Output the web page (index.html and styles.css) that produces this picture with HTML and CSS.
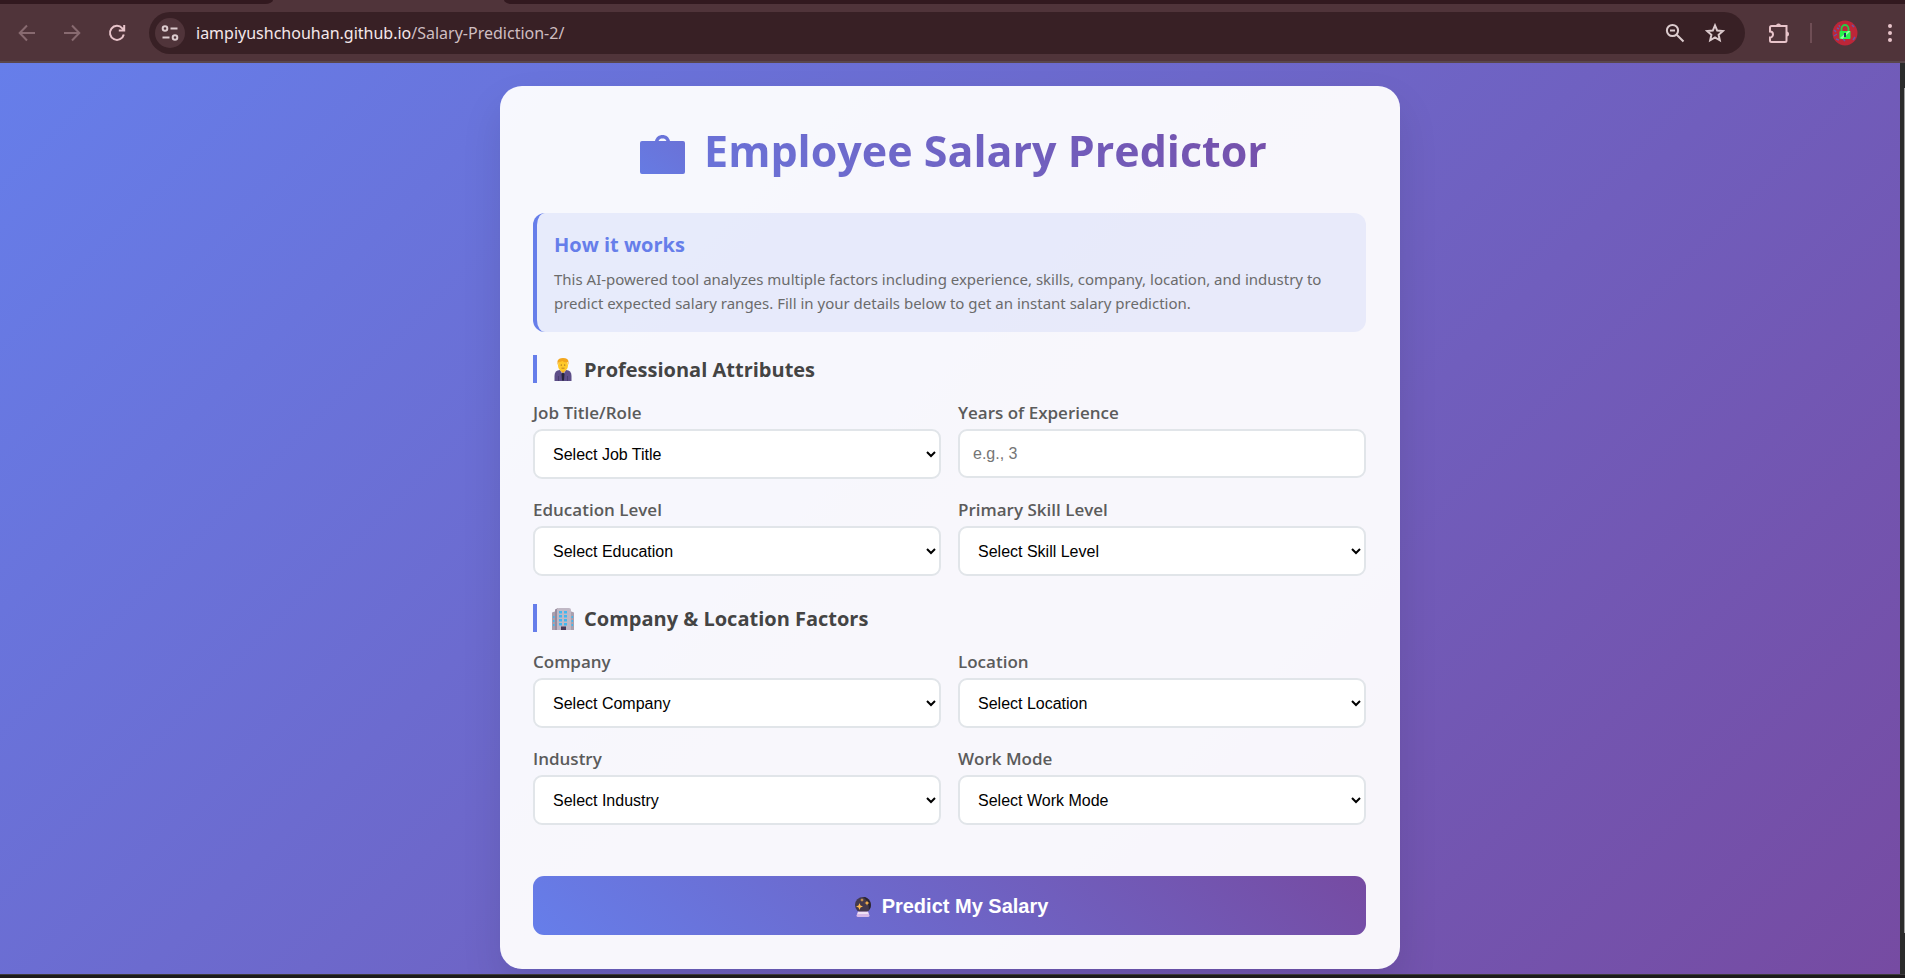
FILE: index.html
```html
<!DOCTYPE html>
<html lang="en">
<head>
<meta charset="utf-8">
<title>Employee Salary Predictor</title>
<link rel="stylesheet" href="styles.css">
</head>
<body>
<header class="browser">
  <div class="tabstrip"><span class="tab-gap tab-gap-left"></span><span class="tab-gap tab-gap-right"></span></div>
  <div class="toolbar">
    <button class="tool nav" aria-label="Back"><svg viewBox="0 0 20 20" class="dim"><path d="M18 10H3M10 2.500 2.700 10l7.300 7.500"/></svg></button>
    <button class="tool nav" aria-label="Forward"><svg viewBox="0 0 20 20" class="dim"><path d="M2 10h15M10 2.500l7.300 7.500-7.300 7.500"/></svg></button>
    <button class="tool nav" aria-label="Reload"><svg viewBox="0 0 20 20"><path d="M16.800 11.500A7 7 0 1 1 15.300 5.300L17 7M17.200 2v5.400h-5.400"/></svg></button>
    <div class="omnibox">
      <button class="site-info" aria-label="Site information"><svg viewBox="0 0 20 20"><circle cx="5" cy="5.500" r="2.300"/><path d="M10.500 5.500h7M2.500 14.500h7"/><circle cx="15" cy="14.500" r="2.300"/></svg></button>
      <a class="url" href="#">iampiyushchouhan.github.io<span class="path">/Salary-Prediction-2/</span></a>
      <button class="tool" aria-label="Zoom"><svg viewBox="0 0 20 20"><circle cx="7.500" cy="7.500" r="5.600"/><path d="M11.700 11.700 18.500 18.500M5 7.500h5"/></svg></button>
      <button class="tool" aria-label="Bookmark"><svg viewBox="0 0 20 20"><path d="m10 2.400 2.200 5.200 5.600.5-4.200 3.700 1.200 5.500-4.800-2.900-4.800 2.900 1.200-5.500-4.200-3.700 5.600-.5z"/></svg></button>
    </div>
    <button class="tool extension" aria-label="Extensions"><svg viewBox="0 0 22 22"><path d="M3.500 4h15v14.500a1.500 1.500 0 0 1-1.500 1.500H3.500a1.500 1.500 0 0 1-1.500-1.500V15.500a3 3 0 0 0 0-6V5.500A1.500 1.500 0 0 1 3.500 4z"/><path class="solid" d="M8 4a2.500 2.500 0 0 1 5 0zM18.500 9.500a2.500 2.500 0 0 1 0 5z"/></svg></button>
    <span class="divider"></span>
    <button class="tool profile" aria-label="Profile"><svg viewBox="0 0 26 26"><circle cx="13" cy="13" r="12.500" fill="#bd2638"/><path d="m2 10 2 2m-2 4 3-2m-1 5 3 1m0-15 1 2m-3 1 2 1m13-4 2 2m1 10-2 3m-10-1 2 2" stroke="#6656a8" stroke-width="1.500" fill="none"/><path d="M9.500 11V8.500a3.500 3.500 0 0 1 7 0V11" stroke="#25cf45" stroke-width="1.800" fill="none"/><rect x="7.500" y="11" width="11" height="8" rx="1" fill="#27f24b"/><path d="m8 18 8-7h2.500l-8 8z" fill="#8dff9d"/><path d="M12 13h2v4h-2z" fill="#26305f"/></svg></button>
    <button class="tool more" aria-label="Menu"><svg viewBox="0 0 20 20"><g class="solid"><circle cx="10" cy="3" r="2"/><circle cx="10" cy="10" r="2"/><circle cx="10" cy="17" r="2"/></g></svg></button>
  </div>
</header>
<div class="viewport">
  <main class="page">
    <section class="card">
      <h1 class="title"><svg class="briefcase" viewBox="0 0 45 39"><defs><linearGradient id="case" x1="0" y1="1" x2="1" y2="0"><stop stop-color="#667be3"/><stop offset="1" stop-color="#6b71d6"/></linearGradient></defs><path fill="url(#case)" fill-rule="evenodd" d="M15 6C16 2 19 0 22.500 0S29 2 30 6H43q2 0 2 2v29q0 2-2 2H2q-2 0-2-2V8q0-2 2-2zM18.500 6h8c-1-2-2-2.500-4-2.500S19.500 4 18.500 6z"/></svg><span class="title-text">Employee Salary Predictor</span></h1>
      <div class="info">
        <h2 class="info-title">How it works</h2>
        <p class="info-text">This AI-powered tool analyzes multiple factors including experience, skills, company, location, and industry to predict expected salary ranges. Fill in your details below to get an instant salary prediction.</p>
      </div>
      <form class="form">
        <h2 class="section-title"><svg class="emoji" viewBox="0 0 24 24"><path fill="#5d4e88" d="M3.500 23v-5q0-6 5.500-6h6q5.500 0 5.500 6v5z"/><path fill="#493d70" d="M7 18h1v5H7zm9 0h1v5h-1z"/><path fill="#d5d9ef" d="m9 12 3 5 3-5z"/><path fill="#25243b" d="m12 14 1.500 2-.5 6-1 1-1-1-.5-6z"/><path fill="#f5ae22" d="M9.500 9h5v4L12 15l-2.500-2z"/><ellipse cx="12" cy="7.500" rx="5" ry="5.500" fill="#ffc928"/><path fill="#f2a61d" d="M6.500 7V3q1-3 5.500-3 5.500 0 5.500 4v3l-1-3q-3 1-5-1-2 1-3.500 1z"/><circle cx="10.300" cy="7" r=".6" fill="#694228"/><circle cx="13.700" cy="7" r=".6" fill="#694228"/><path d="M10.500 10.200h3" stroke="#a36222" stroke-width=".7"/></svg>Professional Attributes</h2>
        <div class="grid">
          <div class="field"><label for="job">Job Title/Role</label><select id="job"><option>Select Job Title</option></select></div>
          <div class="field"><label for="years">Years of Experience</label><input id="years" type="text" placeholder="e.g., 3"></div>
          <div class="field"><label for="education">Education Level</label><select id="education"><option>Select Education</option></select></div>
          <div class="field"><label for="skill">Primary Skill Level</label><select id="skill"><option>Select Skill Level</option></select></div>
        </div>
        <h2 class="section-title"><svg class="emoji" viewBox="0 0 24 24"><path fill="#aaa0ae" d="M1 5.500 5 4v19H1zM19 4l4 1.500V23h-4z"/><path fill="#988c9d" d="M4 2.500 7 1v22H4z"/><path fill="#c0b8c5" d="M6 2q0-1 2-1h10q2 0 2 2v20H6z"/><path fill="#40b7ef" d="M8 4h3v2.500H8zm5 0h3v2.500h-3zM8 8h3v2.500H8zm5 0h3v2.500h-3zM8 12h3v2.500H8zm5 0h3v2.500h-3zM8 16h3v2.500H8zm5 0h3v2.500h-3zM2 9h1.500v2H2zm0 4h1.500v2H2zm0 4h1.500v2H2zM20.500 9H22v2h-1.500zm0 4H22v2h-1.500zm0 4H22v2h-1.500z"/><path fill="#493b59" d="M10 19.500h5V23h-5z"/></svg>Company &amp; Location Factors</h2>
        <div class="grid">
          <div class="field"><label for="company">Company</label><select id="company"><option>Select Company</option></select></div>
          <div class="field"><label for="location">Location</label><select id="location"><option>Select Location</option></select></div>
          <div class="field"><label for="industry">Industry</label><select id="industry"><option>Select Industry</option></select></div>
          <div class="field"><label for="mode">Work Mode</label><select id="mode"><option>Select Work Mode</option></select></div>
        </div>
        <button class="submit" type="button"><svg class="orb" viewBox="0 0 20 20"><circle cx="10" cy="8" r="8" fill="#44394c"/><path fill="#29232f" d="M10 0a8 8 0 0 1 6 13q0-9-6-13z"/><path fill="#d7b9e8" d="M5 14.500h10l1.500 4q0 1.500-1.500 1.500H5q-1.500 0-1.500-1.500z"/><path fill="#efe0f5" d="M5 15h10l.5 2h-11z"/><path fill="#ffb84d" d="m6.500 6 1 2.500L10 9.500l-2.500 1-1 2.500-1-2.500-2.500-1 2.500-1zM14 3.500l.7 1.800 1.800.7-1.800.7L14 8.500l-.7-1.800-1.800-.7 1.800-.7zM9 1l.5 1.500L11 3l-1.500.5L9 5l-.5-1.500L7 3l1.500-.5z"/></svg>Predict My Salary</button>
      </form>
    </section>
  </main>
  <div class="scrollbar"><span class="thumb"></span></div>
</div>
<footer class="taskbar"></footer>
</body>
</html>
```
FILE: styles.css
```css
* { box-sizing: border-box; }
body {
  margin: 0;
  min-height: 100vh;
  display: flex;
  flex-direction: column;
  font-family: "Open Sans", "Noto Sans", sans-serif;
  color: #444;
}
button { border: 0; padding: 0; background: none; cursor: pointer; }

/* Browser chrome */
.browser { background: #50343a; border-bottom: 2px solid #5a464b; }
.tabstrip { display: flex; justify-content: space-between; height: 4px; background: #50343a; }
.tab-gap { background: #32191f; }
.tab-gap-left { width: 273px; border-bottom-right-radius: 8px 4px; }
.tab-gap-right { width: calc(100% - 504px); border-bottom-left-radius: 8px 4px; }
.toolbar { display: flex; align-items: center; height: 57px; padding-left: 4px; }
.tool { display: grid; place-items: center; width: 40px; height: 40px; flex: none; }
.tool svg, .site-info svg { width: 20px; height: 20px; fill: none; stroke: #e8c4ca; stroke-width: 2; }
.nav { width: 45px; }
.tool .dim { stroke: #886a70; }
.omnibox {
  flex: 1;
  display: flex;
  align-items: center;
  height: 42px;
  margin-left: 10px;
  padding: 0 10px 0 6px;
  border-radius: 21px;
  background: #382025;
}
.omnibox .tool svg, .site-info svg { stroke: #dccbce; }
.site-info {
  display: grid;
  place-items: center;
  width: 30px;
  height: 30px;
  border-radius: 50%;
  background: #50343a;
}
.url {
  flex: 1;
  margin-left: 11px;
  color: #f5e8ea;
  font-family: "Noto Sans", "Open Sans", sans-serif;
  font-size: 16px;
  text-decoration: none;
  white-space: nowrap;
}
.path { color: #cfbec1; }
.extension { margin-left: 14px; }
.extension svg { width: 22px; height: 22px; }
.tool svg .solid { fill: #e8c4ca; stroke: none; }
.divider { width: 2px; height: 20px; margin: 0 13px 0 11px; background: #6f4e55; }
.profile svg { width: 26px; height: 26px; stroke: none; }
.more { width: 30px; margin-left: 10px; }

/* Page */
.viewport { flex: 1; display: flex; }
.page {
  flex: 1;
  padding: 23px 20px 5px;
  background: linear-gradient(135deg, #667eea 0%, #764ba2 100%);
}
.card {
  max-width: 900px;
  margin: 0 auto;
  padding: 33px 34px 34px 33px;
  border-radius: 22px;
  background: rgba(255, 255, 255, 0.95);
  box-shadow: 0 20px 40px rgba(0, 0, 0, 0.1);
}
.title {
  display: flex;
  justify-content: center;
  align-items: center;
  gap: 19px;
  margin: 0 0 30px;
  font-size: 43px;
  line-height: 64px;
  padding-left: 8px;
}
.title-text {
  color: transparent;
  background: linear-gradient(45deg, #6a74da, #764fa9);
  background-clip: text;
}
.briefcase { width: 45px; height: 39px; margin-top: 6px; }
.info {
  margin-bottom: 23px;
  padding: 18px 17px 17px;
  border-left: 4px solid #667eea;
  border-radius: 12px;
  background: rgba(102, 126, 234, 0.1);
}
.info-title { margin: 0 0 8px; font-size: 20px; line-height: 28px; color: #667eea; }
.info-text {
  margin: 0;
  font-family: "Noto Sans", "Open Sans", sans-serif;
  font-size: 15px;
  line-height: 24px;
  color: #6b6b6b;
}
.section-title {
  display: flex;
  align-items: center;
  gap: 9px;
  margin: 0 0 17px;
  padding: 2px 0 0 14px;
  border-left: 4px solid #667eea;
  font-size: 20px;
  line-height: 26px;
}
.emoji { width: 24px; height: 24px; }
.grid { display: grid; grid-template-columns: 1fr 1fr; gap: 18px 17px; margin-bottom: 28px; }
.field { display: flex; flex-direction: column; gap: 4px; }
.field label { font-size: 17px; font-weight: 600; line-height: 25px; color: #5b5b5b; }
.field select, .field input {
  width: 100%;
  height: 50px;
  padding: 0 13px;
  border: 2px solid #e1e5e9;
  border-radius: 9px;
  background: #fff;
  color: #000;
  font-family: "Liberation Sans", Arial, sans-serif;
  font-size: 16px;
}
.field select { padding: 0 2px 0 14px; }
.field input { height: 49px; }
.field input::placeholder { color: #757575; }
.submit {
  display: flex;
  align-items: center;
  justify-content: center;
  gap: 9px;
  width: 100%;
  height: 59px;
  margin-top: 51px;
  padding: 2px 0 0 2px;
  border-radius: 11px;
  background: linear-gradient(45deg, #667eea, #764ba2);
  color: #fff;
  font: bold 20px "Liberation Sans", Arial, sans-serif;
}
.orb { width: 20px; height: 20px; }

.scrollbar { width: 5px; padding: 25px 0 41px 4px; background: #2b2b2b; display: flex; }
.thumb { flex: 1; background: #9f9f9f; }
.taskbar { height: 4px; background: #1c1a1b; border-top: 1px solid #3d3a3c; }
```
